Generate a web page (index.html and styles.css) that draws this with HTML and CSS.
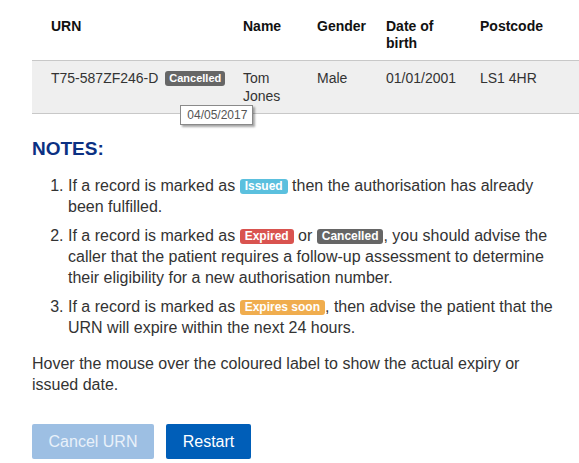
FILE: index.html
```html
<!DOCTYPE html>
<html lang="en">
<head>
<meta charset="utf-8">
<title>URN lookup</title>
<link rel="stylesheet" href="styles.css">
</head>
<body>
<div class="page">
  <table class="results">
    <colgroup>
      <col class="c-urn"><col class="c-name"><col class="c-gender"><col class="c-dob"><col class="c-post">
    </colgroup>
    <thead>
      <tr>
        <th class="first">URN</th>
        <th>Name</th>
        <th>Gender</th>
        <th>Date of birth</th>
        <th>Postcode</th>
      </tr>
    </thead>
    <tbody>
      <tr>
        <td class="first">T75-587ZF246-D <span class="tip-host"><span class="label label-cancelled label-sm">Cancelled</span><span class="tooltip">04/05/2017</span></span></td>
        <td>Tom Jones</td>
        <td>Male</td>
        <td>01/01/2001</td>
        <td>LS1 4HR</td>
      </tr>
    </tbody>
  </table>

  <div class="content">
    <h2 class="notes-title">NOTES:</h2>
    <ol class="notes">
      <li>If a record is marked as <span class="label label-issued">Issued</span> then the authorisation has already been fulfilled.</li>
      <li>If a record is marked as <span class="label label-expired">Expired</span> or <span class="label label-cancelled">Cancelled</span>, you should advise the caller that the patient requires a follow-up assessment to determine their eligibility for a new authorisation number.</li>
      <li>If a record is marked as <span class="label label-soon">Expires soon</span>, then advise the patient that the URN will expire within the next 24 hours.</li>
    </ol>
    <p class="hint">Hover the mouse over the coloured label to show the actual expiry or issued date.</p>

    <div class="actions">
      <button class="btn btn-disabled" type="button">Cancel URN</button>
      <button class="btn btn-primary" type="button">Restart</button>
    </div>
  </div>
</div>
</body>
</html>
```

FILE: styles.css
```css
html, body {
  margin: 0;
  padding: 0;
  background: #fff;
}
body {
  font-family: "Liberation Sans", Arial, sans-serif;
  color: #333;
  font-size: 16px;
  overflow: hidden;
}
.page {
  padding: 8px 0 0 32px;
}
.content {
  width: 533px;
}
.results {
  width: 547px;
  border-collapse: collapse;
  table-layout: fixed;
  font-size: 14px;
}
.c-urn { width: 211px; }
.c-name { width: 74px; }
.c-gender { width: 69px; }
.c-dob { width: 94px; }
.c-post { width: 99px; }
.results th,
.results td {
  text-align: left;
  vertical-align: top;
  padding: 8px 14px 8px 0;
  border-bottom: 1px solid #c8c8c8;
}
.results th {
  font-weight: bold;
  color: #111;
  line-height: 17px;
  padding-top: 10px;
}
.results td {
  line-height: 18px;
  background: #efefef;
}
.results .first {
  padding-left: 19px;
}
.tip-host {
  position: relative;
  display: inline-block;
  margin-left: 3px;
}
.tooltip {
  position: absolute;
  left: 15px;
  top: 36px;
  font-size: 12px;
  line-height: 14px;
  padding: 2px 5px 2px 6px;
  background: #fff;
  color: #555;
  border: 1px solid #8a8a8a;
  box-shadow: 2px 2px 2px rgba(0,0,0,0.35);
  white-space: nowrap;
}
.label {
  display: inline-block;
  font-size: 12px;
  font-weight: bold;
  line-height: 12px;
  color: #fff;
  padding: 1px 5px 2px 5px;
  border-radius: 3px;
  vertical-align: 1px;
  white-space: nowrap;
}
.label-sm {
  font-size: 11px;
  line-height: 11px;
  padding: 2px 4px 2px;
}
.label-cancelled { background: #666; }
.label-issued { background: #5bc0de; }
.label-expired { background: #d9534f; }
.label-soon { background: #f0ad4e; }
.notes-title {
  margin: 24px 0 0 0;
  font-size: 19px;
  line-height: 22px;
  font-weight: bold;
  color: #0b3183;
}
.notes {
  margin: 15px 0 0 0;
  padding-left: 36px;
  line-height: 21px;
}
.notes li {
  margin-bottom: 8px;
}
.notes li:last-child {
  margin-bottom: 0;
}
.hint {
  margin: 15px 0 0 0;
  line-height: 21px;
}
.actions {
  display: flex;
  gap: 12px;
  margin-top: 29px;
}
.btn {
  font-family: "Liberation Sans", Arial, sans-serif;
  font-size: 16px;
  height: 35px;
  padding: 0 16px;
  border: none;
  border-radius: 2px;
  color: #fff;
}
.btn-disabled {
  background: #9dbfe3;
  color: #e9f1fa;
  width: 122px;
}
.btn-primary {
  background: #005eb8;
  width: 85px;
}
```
